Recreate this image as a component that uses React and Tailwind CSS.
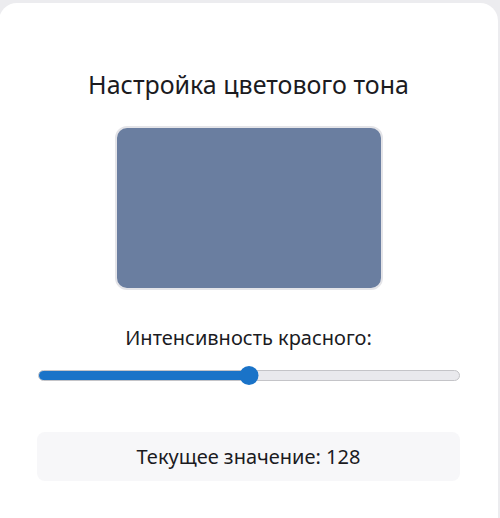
import React, { useState } from "react";

const App = () => {
  const [red, setRed] = useState(128);
  const pct = (red / 255) * 100;

  return (
    <div className="h-[518px] bg-[#ececef] pt-[3px] overflow-hidden" style={{ fontFamily: '"Noto Sans", "Open Sans", sans-serif' }}>
      <div className="w-[499px] -ml-[1px] h-[540px] bg-white rounded-[18px] px-[38px] pt-[64px] flex flex-col items-center">
        {/* Title */}
        <h1 className="text-[25px] leading-[34px] text-[#1b1b1f] font-normal">Настройка цветового тона</h1>

        {/* Swatch */}
        <div className="mt-[25px] w-[268px] h-[164px] rounded-[12px] border-2 border-[#e4e4e8] bg-[#6a7ea0]" />

        {/* Slider */}
        <p className="mt-[34px] text-[20px] leading-[28px] text-[#1b1b1f]">Интенсивность красного:</p>
        <div className="relative mt-[13px] w-[422px] h-[20px] flex items-center">
          <div className="w-full h-[11px] rounded-full bg-[#e9e9ed] border border-[#c4c4c8] overflow-hidden">
            <div className="h-full bg-[#1a73c8]" style={{ width: `${pct}%` }} />
          </div>
          <div
            className="absolute top-[1px] w-[19px] h-[19px] rounded-full bg-[#1a73c8] -translate-x-1/2"
            style={{ left: `${pct}%` }}
          />
          <input
            type="range"
            min="0"
            max="255"
            value={red}
            onChange={(e) => setRed(Number(e.target.value))}
            className="absolute inset-0 w-full opacity-0 cursor-pointer"
          />
        </div>

        {/* Value */}
        <div className="mt-[47px] w-[423px] h-[49px] rounded-[8px] bg-[#f7f7f9] flex items-center justify-center">
          <span className="text-[20px] text-[#1b1b1f]">Текущее значение: {red}</span>
        </div>
      </div>
    </div>
  );
};

export default App;
